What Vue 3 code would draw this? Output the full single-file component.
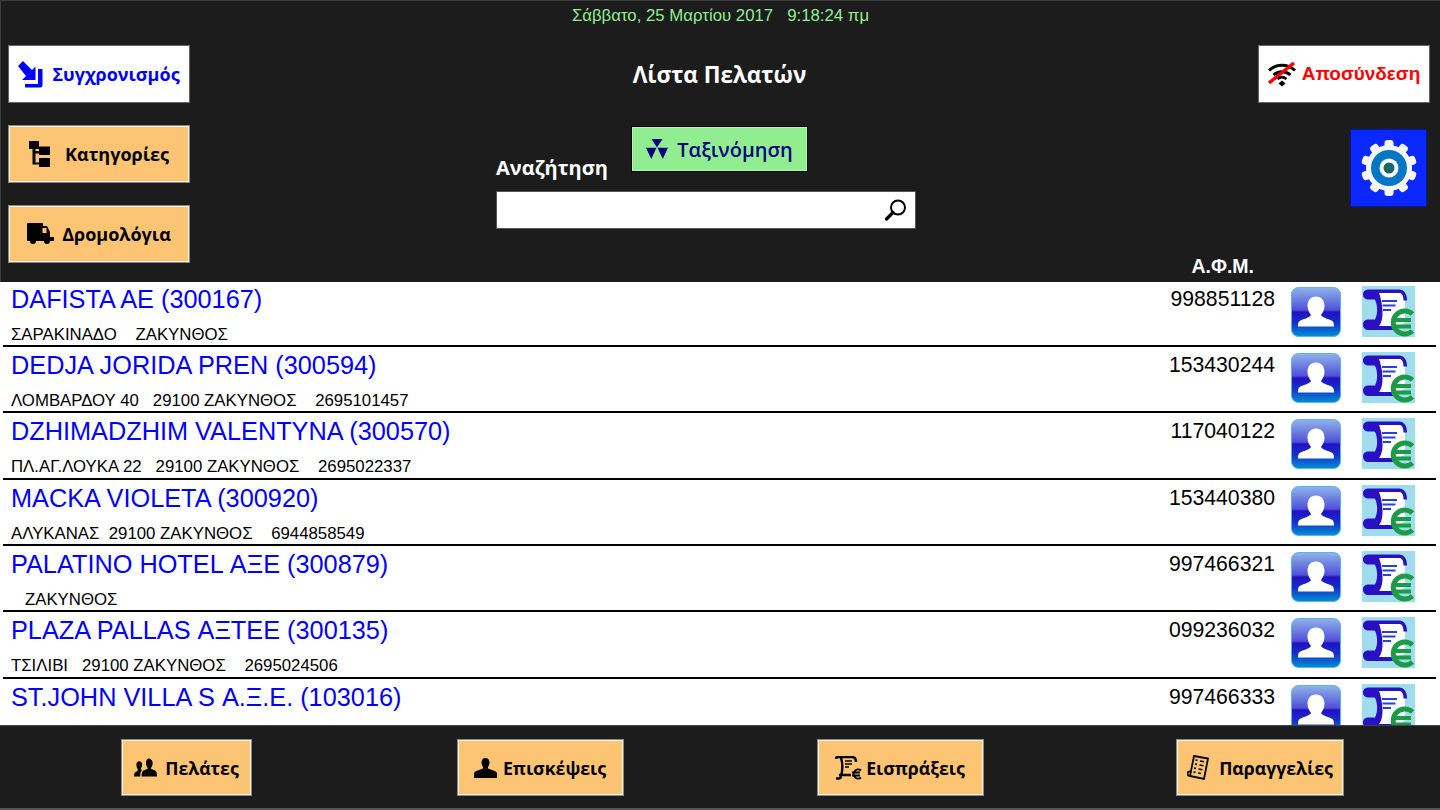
<script setup>
const customers = [
  { name: 'DAFISTA AE (300167)', address: 'ΣΑΡΑΚΙΝΑΔΟ    ΖΑΚΥΝΘΟΣ', vat: '998851128' },
  { name: 'DEDJA JORIDA PREN (300594)', address: 'ΛΟΜΒΑΡΔΟΥ 40   29100 ΖΑΚΥΝΘΟΣ    2695101457', vat: '153430244' },
  { name: 'DZHIMADZHIM VALENTYNA (300570)', address: 'ΠΛ.ΑΓ.ΛΟΥΚΑ 22   29100 ΖΑΚΥΝΘΟΣ    2695022337', vat: '117040122' },
  { name: 'MACKA VIOLETA (300920)', address: 'ΑΛΥΚΑΝΑΣ  29100 ΖΑΚΥΝΘΟΣ    6944858549', vat: '153440380' },
  { name: 'PALATINO HOTEL ΑΞΕ (300879)', address: '   ΖΑΚΥΝΘΟΣ', vat: '997466321' },
  { name: 'PLAZA PALLAS ΑΞΤΕΕ (300135)', address: 'ΤΣΙΛΙΒΙ   29100 ΖΑΚΥΝΘΟΣ    2695024506', vat: '099236032' },
  { name: 'ST.JOHN VILLA S Α.Ξ.Ε. (103016)', address: '', vat: '997466333' },
]
</script>

<template>
  <div class="page">
    <svg class="defs" width="0" height="0" aria-hidden="true">
      <defs>
        <linearGradient id="tileGrad" x1="0" y1="0" x2="0" y2="1">
          <stop offset="0" stop-color="#8fb4ea" />
          <stop offset="0.46" stop-color="#5050d8" />
          <stop offset="0.5" stop-color="#2410c4" />
          <stop offset="0.72" stop-color="#1430c8" />
          <stop offset="1" stop-color="#0290d4" />
        </linearGradient>
      </defs>
    </svg>

    <header class="header">
      <div class="date">Σάββατο, 25 Μαρτίου 2017 &nbsp; 9:18:24 πμ</div>
      <div class="top">
        <div class="col-left">
          <button class="btn btn-white btn-sync">
            <svg width="26" height="27" viewBox="0 0 26 27"><path d="M0 5 5 0l9 9 3.500-3.500V19H4l4-4z" fill="#0000ff"/><path d="M20 8h4.500v16a2.500 2.500 0 0 1-2.500 2.500H7V23h13z" fill="#0000ff"/></svg>
            <span>Συγχρονισμός</span>
          </button>
          <button class="btn btn-orange btn-cat">
            <svg width="21" height="27" viewBox="0 0 21 27"><path d="M0 0h10v8H6.500v2H10V5.500h11v8.500H10v-1.500H6.500v9H10V17h11v9H10v-2.500H3.500V8H0z" fill="#000"/></svg>
            <span>Κατηγορίες</span>
          </button>
          <button class="btn btn-orange btn-route">
            <svg width="27" height="22" viewBox="0 0 27 22"><path d="M1 0h14a1 1 0 0 1 1 1v2h4l3 6v5h4v4h-4a3 3 0 0 1-6 0H9a3 3 0 0 1-6 0H0V1a1 1 0 0 1 1-1z" fill="#000"/><rect x="15.500" y="5" width="4" height="5" fill="#fcc473"/></svg>
            <span>Δρομολόγια</span>
          </button>
        </div>

        <div class="col-center">
          <h1 class="title">Λίστα Πελατών</h1>
          <div class="search-head">
            <label class="search-label">Αναζήτηση</label>
            <button class="btn-sort">
              <svg width="22" height="20" viewBox="0 0 22 20"><path d="M5.500 0h11L11 8.500zM0 8.800h10.500L5.250 20zM11.500 8.800H22L16.750 20z" fill="#000080"/></svg>
              <span>Ταξινόμηση</span>
            </button>
          </div>
          <div class="search-box">
            <svg width="24" height="24" viewBox="0 0 24 24"><circle cx="14" cy="9.500" r="7" fill="none" stroke="#000" stroke-width="2"/><path d="M9 14.500 2.500 21" stroke="#000" stroke-width="3.200" stroke-linecap="round"/></svg>
          </div>
        </div>

        <div class="col-right">
          <button class="btn btn-white btn-logout">
            <svg width="28" height="25" viewBox="0 0 28 25"><path d="M1 8.500C8 1.500 20 1.500 27 8.500" fill="none" stroke="#000" stroke-width="3"/><path d="M5.500 13c5-4.500 12-4.500 17 0" fill="none" stroke="#000" stroke-width="3"/><path d="M9.500 17c3-2.500 6-2.500 9 0" fill="none" stroke="#000" stroke-width="2.500"/><path d="m14 18.500 3.500 3-3.500 3-3.500-3z" fill="#000"/><path d="M1 21 26 1" stroke="#ff0000" stroke-width="3.500"/></svg>
            <span>Αποσύνδεση</span>
          </button>
          <button class="btn-settings" aria-label="Ρυθμίσεις">
            <svg width="60" height="60" viewBox="0 0 60 60">
              <g fill="#f6f6f6">
                <circle cx="30" cy="30" r="23" />
                <rect v-for="a in [0,36,72,108,144,180,216,252,288,324]" :key="a" x="25.500" y="2" width="9" height="10" rx="3" :transform="`rotate(${a} 30 30)`" />
              </g>
              <circle cx="30" cy="30" r="18" fill="#0476c6" />
              <circle cx="30" cy="30" r="9.500" fill="#fff" />
              <circle cx="30" cy="30" r="5.500" fill="#16666e" />
            </svg>
          </button>
        </div>
      </div>
      <div class="vat-head">Α.Φ.Μ.</div>
    </header>

    <main class="list">
      <article v-for="c in customers" :key="c.name" class="row">
        <div class="info">
          <div class="name">{{ c.name }}</div>
          <div class="address">{{ c.address }}</div>
        </div>
        <div class="vat">{{ c.vat }}</div>
        <svg class="tile-person" width="50" height="50" viewBox="0 0 50 50">
          <rect x="0.500" y="0.500" width="49" height="49" rx="7" fill="url(#tileGrad)" stroke="#5ab4e4" />
          <path d="M25 9.500c5.500 0 8.500 4 8.500 9.500 0 4-2 7-3.500 9 1 2 4 3 9.500 5 3 1 3.500 3 3.500 6.500H7c0-3.500.5-5.500 3.500-6.500 5.500-2 8.500-3 9.500-5-1.500-2-3.500-5-3.500-9 0-5.500 3-9.500 8.500-9.500z" fill="#fff" />
        </svg>
        <svg class="tile-scroll" width="53" height="51" viewBox="0 0 53 51">
          <rect width="53" height="51" fill="#9fdcee" />
          <path d="M13 6h24c4 0 6 3 6 8v22l-10 8H12c4-5 5-10 4-17s-1-15-3-21z" fill="#fff" />
          <path d="M1 8.500C1 5 3.500 3.500 7 3.500h30c5 0 8 4 8 11h-3.500c0-5-1.500-7.500-4.500-7.500H17c2 5 3.500 13 3.500 20 0 6-1.500 11-3.500 13h15v4H7c-4 0-6-2-6-5.500S3 33.500 7 33.500h6c1.500-3 2.500-7 2-12-.5-4-1-6.500-2.500-8H7c-3.500 0-6-1.500-6-5z" fill="#2a10c4" />
          <path d="M20 15h15M20.500 19.500h13M21 24h8" stroke="#2a3fe0" stroke-width="2.200" />
          <path d="M50.500 28a11.500 11.500 0 1 0 0 17" fill="none" stroke="#1d9a46" stroke-width="5" />
          <path d="M30 34h19M30 40.500h19" stroke="#1d9a46" stroke-width="3.800" />
        </svg>
      </article>
    </main>

    <footer class="footer">
      <div class="foot-cell foot-first">
        <button class="btn btn-orange btn-foot foot-a">
          <svg width="23" height="19" viewBox="0 0 24 19"><path d="M15 0c3 0 4.500 2.500 4.500 5 0 2-1 4-2 5 0 1 2 1.500 4 2.500 2 .8 2.500 2.500 2.500 6.500H8c0-4 .5-5.700 2.500-6.500 2-1 4-1.500 4-2.500-1-1-2-3-2-5 0-2.500 1-5 2.500-5z" fill="#000"/><path d="M5.500 3c2 0 3 1.500 3 3.500 0 1.500-.5 3-1.500 4 0 1 1 1.500 1.500 1.500-1.500 1-2 3-2 7H0c0-3 .5-4 2-5 1-.5 2-1 2-2.500C3 10 2.500 8 2.500 6.500 2.500 4.500 3.500 3 5.500 3z" fill="#000"/></svg>
          <span>Πελάτες</span>
        </button>
      </div>
      <div class="foot-cell">
        <button class="btn btn-orange btn-foot foot-b">
          <svg width="23" height="20" viewBox="0 0 23 20"><path d="M11.500 0c2.500 0 4 2 4 4.500 0 2-1 3.500-1.500 4.500v1.500l4 1.500c3 1 5 1.500 5 3.500V20H0v-4.500c0-2 2-2.500 5-3.500l4-1.500V9C8.500 8 7.500 6.500 7.500 4.500 7.500 2 9 0 11.500 0z" fill="#000"/></svg>
          <span>Επισκέψεις</span>
        </button>
      </div>
      <div class="foot-cell">
        <button class="btn btn-orange btn-foot foot-c">
          <svg width="27" height="24" viewBox="0 0 27 24"><path d="M1 3a2 2 0 0 1 2-2h14c3 0 4 2 4 5M6 2c1.500 4 2 12 0 18a2.500 2.500 0 0 1-2.500 2.500H1M4 19h12" fill="none" stroke="#000" stroke-width="2.400"/><path d="M10 5h7M10 8h7M10 11h4" stroke="#000" stroke-width="1.600"/><path d="M26 14.500a4.500 4.500 0 1 0 0 7M17 16.500h8M17 19.500h8" fill="none" stroke="#000" stroke-width="2"/></svg>
          <span>Εισπράξεις</span>
        </button>
      </div>
      <div class="foot-cell">
        <button class="btn btn-orange btn-foot foot-d">
          <svg width="22" height="26" viewBox="0 0 22 26"><path d="M7 1l14 2.500L17 24 3 21zM3 21c-2 0-3-1-2-4l3-1" fill="none" stroke="#000" stroke-width="1.800"/><path d="M8.500 5l2 .4M13 6l4 .7M8 9l2 .4M12.500 10l4 .7M7 13l2 .4M11.500 14l4 .7M6.500 17l2 .4M11 18l3 .5" stroke="#000" stroke-width="1.600"/></svg>
          <span>Παραγγελίες</span>
        </button>
      </div>
    </footer>
  </div>
</template>

<style>
html, body { margin: 0; overflow: hidden; }
</style>

<style scoped>
.page {
  width: 1440px;
  height: 810px;
  display: grid;
  grid-template-rows: 282px 1fr 85px;
  overflow: hidden;
  background: #1c1c1c;
  font-family: "Liberation Sans", Arial, sans-serif;
}
.defs { position: absolute; }
.header {
  position: relative;
  z-index: 1;
  background: #1c1c1c;
  border-top: 1px solid #3c3c3c;
  border-left: 1px solid #3c3c3c;
  box-sizing: border-box;
  display: flex;
  flex-direction: column;
}
.date {
  height: 29px;
  line-height: 29px;
  text-align: center;
  color: #90ee90;
  font-size: 16.800px;
}
.top {
  display: flex;
  margin-top: 15px;
  height: 218px;
}
.col-left {
  width: 182px;
  margin-left: 7px;
  display: flex;
  flex-direction: column;
  gap: 22px;
}
.btn {
  display: flex;
  align-items: center;
  justify-content: center;
  padding: 0;
  box-sizing: border-box;
  height: 58px;
  font-family: "Open Sans", "Liberation Sans", sans-serif;
  font-weight: 700;
  font-size: 18px;
  white-space: nowrap;
}
.btn-white {
  background: #fff;
  border: 1px solid #666;
}
.btn-orange {
  background: #fcc473;
  color: #000;
  border: 2px solid #fdf3e4;
  outline: 1px solid #888;
  outline-offset: -1px;
}
.btn-sync { color: #0000ff; gap: 8px; }
.btn-cat { gap: 15px; }
.btn-route { gap: 8px; }
.col-center {
  width: 420px;
  margin-left: 306px;
  display: flex;
  flex-direction: column;
}
.title {
  margin: 1px 0 0 135px;
  width: 177px;
  height: 58px;
  line-height: 58px;
  text-align: center;
  color: #fff;
  font-family: "Open Sans", sans-serif;
  font-weight: 700;
  font-size: 22.500px;
  white-space: nowrap;
}
.search-head {
  display: flex;
  margin-top: 22px;
  height: 54px;
}
.search-label {
  width: 135px;
  align-self: flex-end;
  color: #fff;
  font-family: "Open Sans", sans-serif;
  font-weight: 700;
  font-size: 20px;
  line-height: 30px;
  margin-bottom: -3px;
}
.btn-sort {
  width: 177px;
  height: 46px;
  box-sizing: border-box;
  background: #90ee90;
  border: 1px solid #000;
  color: #000080;
  display: flex;
  align-items: center;
  justify-content: center;
  gap: 9px;
  padding: 0;
  font-family: "Open Sans", sans-serif;
  font-weight: 600;
  font-size: 20px;
  box-shadow: inset 0 0 0 1px #b4f4b4;
}
.search-box {
  margin-top: 11px;
  width: 420px;
  height: 38px;
  box-sizing: border-box;
  background: #fff;
  border: 1px solid #555;
  display: flex;
  align-items: center;
  justify-content: flex-end;
  padding-right: 7px;
}
.col-right {
  flex: 1;
  display: flex;
  flex-direction: column;
  align-items: flex-end;
  padding-right: 10px;
}
.btn-logout {
  width: 172px;
  color: #ff0000;
  gap: 6px;
  font-family: "Liberation Sans", Arial, sans-serif;
  font-size: 18.900px;
}
.btn-settings {
  width: 77px;
  height: 78px;
  margin-top: 26px;
  margin-right: 3px;
  padding: 0;
  background: #0a28ff;
  border: 1px solid #0018a0;
  display: flex;
  align-items: center;
  justify-content: center;
}
.vat-head {
  height: 20px;
  line-height: 20px;
  margin-top: -7px;
  text-align: right;
  padding-right: 186px;
  color: #fff;
  font-weight: 700;
  font-size: 19.500px;
}
.list {
  background: #fff;
  overflow: hidden;
  margin-top: -1.330px;
  min-height: 0;
}
.row {
  height: 66.330px;
  box-sizing: border-box;
  margin: 0 4px 0 3px;
  padding: 6px 0 0 8px;
  border-bottom: 2px solid #000;
  display: flex;
  align-items: flex-start;
}
.info { width: 1100px; }
.name {
  margin-top: -1px;
  color: #0000ff;
  font-size: 25.300px;
  line-height: 26px;
  white-space: nowrap;
}
.address {
  margin-top: 13px;
  color: #000;
  font-size: 16.800px;
  line-height: 20px;
  min-height: 20px;
  white-space: pre;
}
.vat {
  width: 164px;
  text-align: right;
  font-size: 21.200px;
  line-height: 24px;
  color: #000;
}
.tile-person { margin-left: 16px; flex: none; }
.tile-scroll { margin-left: 21px; margin-top: -1px; flex: none; }
.footer {
  position: relative;
  z-index: 1;
  background: #1c1c1c;
  border-top: 1px solid #444;
  border-bottom: 2px solid #555;
  box-sizing: border-box;
  display: grid;
  grid-template-columns: repeat(4, 360px);
  padding-top: 13px;
}
.foot-cell { display: flex; justify-content: center; align-items: flex-start; }
.foot-first { padding-left: 13px; }
.btn-foot { height: 57px; font-size: 17.700px; }
.foot-a { width: 131px; gap: 8px; }
.foot-b { width: 167px; gap: 6px; }
.foot-c { width: 167px; gap: 4px; }
.foot-d { width: 168px; gap: 10px; }
</style>
